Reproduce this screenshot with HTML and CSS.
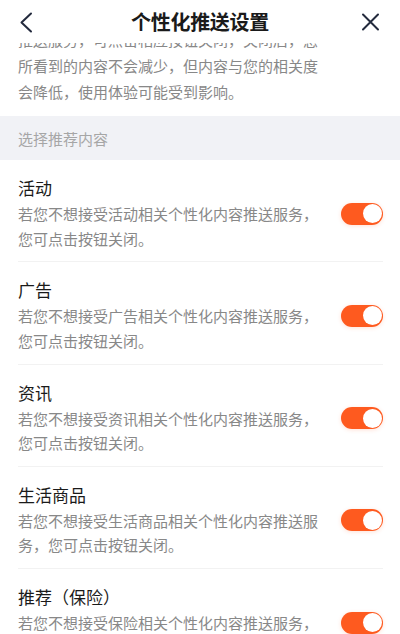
FILE: index.html
```html
<!DOCTYPE html>
<html lang="zh-CN">
<head>
<meta charset="utf-8">
<link rel="stylesheet" href="styles.css">
</head>
<body>
<div class="page">
  <header class="nav">
    <svg class="nav-icon back" viewBox="0 0 24 24" width="24" height="24"><path d="M15 3.5 L5.5 12.5 L15 21.5" fill="none" stroke="#232a3d" stroke-width="2" stroke-linecap="round" stroke-linejoin="round"/></svg>
    <h1 class="nav-title">个性化推送设置</h1>
    <svg class="nav-icon close" viewBox="0 0 24 24" width="24" height="24"><path d="M3 4.5 L18 19.5 M18 4.5 L3 19.5" fill="none" stroke="#232a3d" stroke-width="2" stroke-linecap="round"/></svg>
  </header>
  <main class="scroll">
    <p class="intro">推送服务，可点击相应按钮关闭，关闭后，您所看到的内容不会减少，但内容与您的相关度会降低，使用体验可能受到影响。</p>
    <div class="section">选择推荐内容</div>
    <ul class="list">
      <li class="item">
        <div class="text">
          <div class="title">活动</div>
          <div class="desc">若您不想接受活动相关个性化内容推送服务，您可点击按钮关闭。</div>
        </div>
        <span class="toggle on"><span class="knob"></span></span>
      </li>
      <li class="item">
        <div class="text">
          <div class="title">广告</div>
          <div class="desc">若您不想接受广告相关个性化内容推送服务，您可点击按钮关闭。</div>
        </div>
        <span class="toggle on"><span class="knob"></span></span>
      </li>
      <li class="item">
        <div class="text">
          <div class="title">资讯</div>
          <div class="desc">若您不想接受资讯相关个性化内容推送服务，您可点击按钮关闭。</div>
        </div>
        <span class="toggle on"><span class="knob"></span></span>
      </li>
      <li class="item">
        <div class="text">
          <div class="title">生活商品</div>
          <div class="desc">若您不想接受生活商品相关个性化内容推送服务，您可点击按钮关闭。</div>
        </div>
        <span class="toggle on"><span class="knob"></span></span>
      </li>
      <li class="item">
        <div class="text">
          <div class="title">推荐（保险）</div>
          <div class="desc">若您不想接受保险相关个性化内容推送服务，您可点击按钮关闭。</div>
        </div>
        <span class="toggle on"><span class="knob"></span></span>
      </li>
    </ul>
  </main>
</div>
</body>
</html>
```
FILE: styles.css
```css
* { box-sizing: border-box; }
html, body {
  margin: 0;
  padding: 0;
  background: #fff;
}
body {
  font-family: "Noto Sans CJK SC", "Noto Sans", sans-serif;
  width: 400px;
  height: 634px;
  overflow: hidden;
}
.page {
  display: flex;
  flex-direction: column;
  height: 634px;
}
.nav {
  flex: 0 0 43px;
  height: 43px;
  display: flex;
  align-items: center;
  justify-content: space-between;
  padding: 0 16px;
  background: #fff;
  position: relative;
  z-index: 2;
}
.nav-icon { display: block; }
.nav-title {
  margin: 0;
  font-size: 20px;
  font-weight: 700;
  color: #1a1a1a;
  line-height: 28px;
  letter-spacing: -0.3px;
}
.scroll {
  flex: 1;
  overflow: hidden;
}
.intro {
  margin: -16px 0 0 0;
  padding: 0 82px 11px 18px;
  font-size: 15px;
  line-height: 26px;
  color: #888;
}
.section {
  height: 44px;
  display: flex;
  align-items: center;
  padding-left: 18px;
  background: #f1f2f6;
  font-size: 15px;
  color: #a6a6a6;
}
.list {
  list-style: none;
  margin: 0;
  padding: 0;
}
.item {
  display: flex;
  align-items: center;
  margin: 0 17px 0 18px;
  padding: 16px 0 10.3px;
  border-bottom: 1px solid #f2f2f2;
}
.text {
  flex: 1;
  min-width: 0;
  padding-right: 18px;
}
.title {
  font-size: 17px;
  line-height: 24px;
  color: #1a1a1a;
  margin-bottom: 2px;
}
.desc {
  font-size: 15px;
  line-height: 24.5px;
  color: #888;
}
.toggle {
  flex: 0 0 42px;
  width: 42px;
  height: 22px;
  border-radius: 11px;
  background: #fe5a1f;
  display: flex;
  align-items: center;
  justify-content: flex-end;
  padding-right: 1.5px;
  box-shadow: 0 1px 4px rgba(254, 90, 31, 0.18);
}
.knob {
  width: 19px;
  height: 19px;
  border-radius: 50%;
  background: #fff;
}
```
